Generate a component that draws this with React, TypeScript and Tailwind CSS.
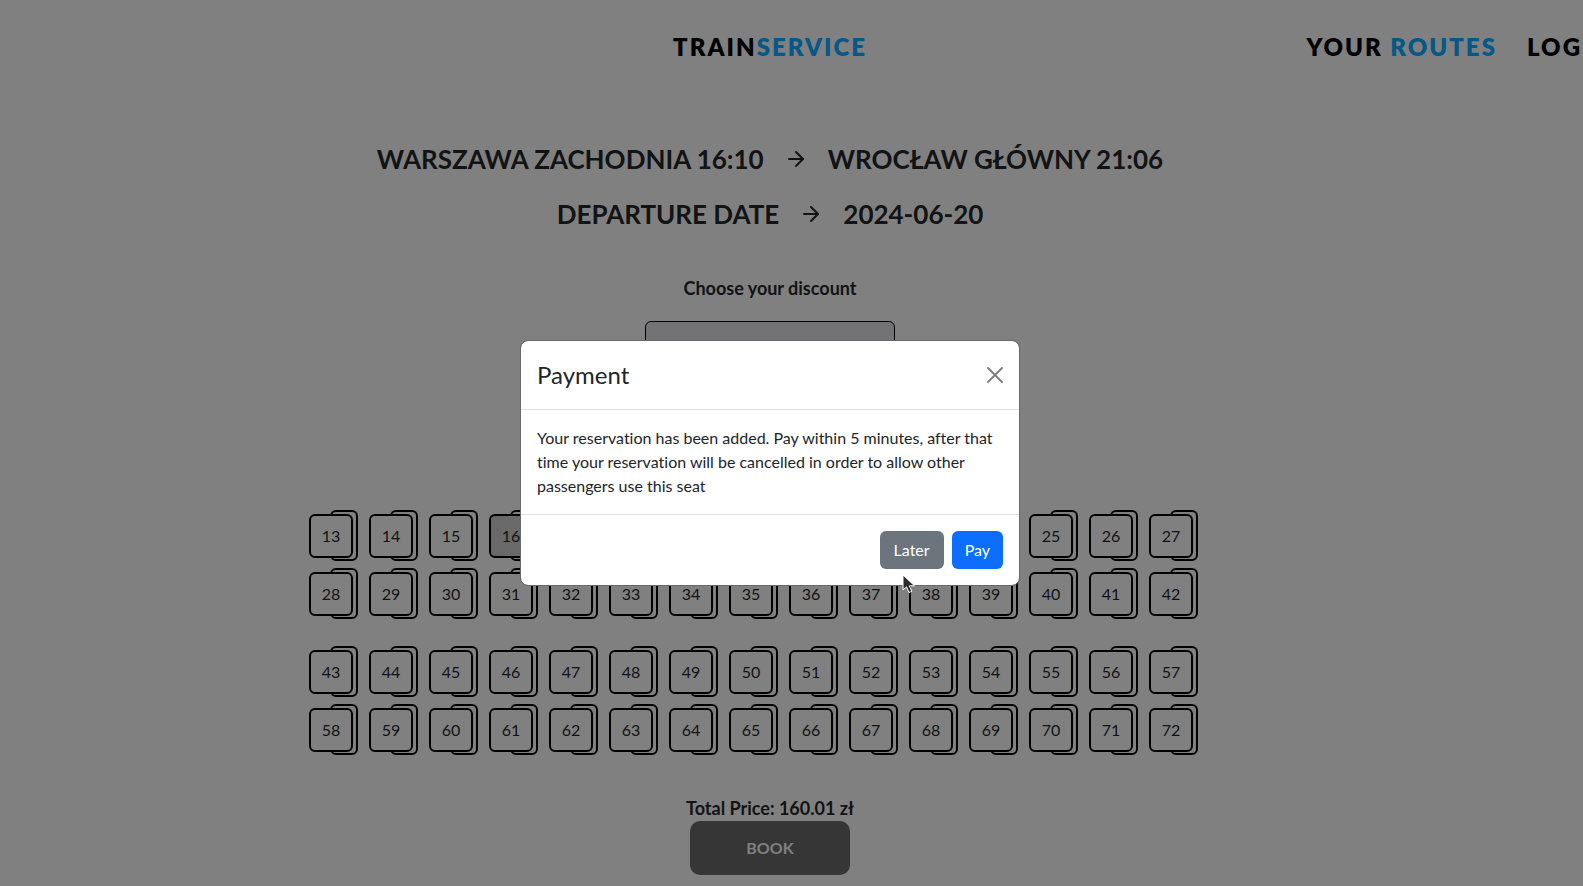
import { LuArrowRight } from "react-icons/lu";

const sections = [
  [13, 28],
  [43, 58],
];

function Seat({ number, taken }: { number: number; taken: boolean }) {
  return (
    <button
      type="button"
      aria-label={`Seat ${number}`}
      className="relative h-[51px] w-[49px] text-base"
    >
      <span className="absolute inset-y-0 right-0 w-7 rounded-md border-2 border-black" />
      <span
        className={`absolute top-1 left-0 flex size-11 items-center justify-center rounded-md border-2 border-black ${
          taken ? "bg-[#696969]" : "bg-[#808080]"
        }`}
      >
        {number}
      </span>
    </button>
  );
}

function SeatRow({ start }: { start: number }) {
  return (
    <div className="flex gap-[11px]">
      {Array.from({ length: 15 }, (_, i) => (
        <Seat key={i} number={start + i} taken={start + i === 16} />
      ))}
    </div>
  );
}

function PaymentDialog() {
  return (
    <div
      role="dialog"
      aria-labelledby="payment-title"
      className="absolute inset-x-0 top-[340px] mr-[43px] flex justify-center"
    >
      <div className="w-[500px] rounded-lg border border-[#696969] bg-white bg-clip-padding text-[#212529]">
        <div className="flex items-center justify-between border-b border-[#dee2e6] p-4">
          <h2 id="payment-title" className="text-2xl leading-9">
            Payment
          </h2>
          <button type="button" aria-label="Close" className="opacity-50">
            <svg viewBox="0 0 16 16" className="size-4" fill="#000">
              <path d="M.293.293a1 1 0 0 1 1.414 0L8 6.586 14.293.293a1 1 0 1 1 1.414 1.414L9.414 8l6.293 6.293a1 1 0 0 1-1.414 1.414L8 9.414l-6.293 6.293a1 1 0 0 1-1.414-1.414L6.586 8 .293 1.707a1 1 0 0 1 0-1.414z" />
            </svg>
          </button>
        </div>
        <p className="p-4 text-base">
          Your reservation has been added. Pay within 5 minutes, after that time your
          reservation will be cancelled in order to allow other passengers use this seat
        </p>
        <div className="flex justify-end gap-2 border-t border-[#dee2e6] p-4">
          <button
            type="button"
            className="min-w-16 rounded-md bg-[#6c757d] px-[13px] py-[7px] text-white"
          >
            Later
          </button>
          <button type="button" className="rounded-md bg-[#0d6efd] px-[13px] py-[7px] text-white">
            Pay
          </button>
        </div>
      </div>
      <svg
        viewBox="0 0 14 20"
        className="absolute top-[234px] left-1/2 ml-[132px] h-5 w-3.5"
        aria-hidden="true"
      >
        <path
          d="M1 1v15l3.5-3.2L7 18.5l2.8-1.2-2.5-5.5H12.5z"
          fill="#2b2b2b"
          stroke="#fff"
          strokeWidth="1"
        />
      </svg>
    </div>
  );
}

export default function App() {
  return (
    <div className="relative min-h-screen overflow-hidden bg-[#808080] font-['Lato',sans-serif] text-[#111315] [font-variant-ligatures:none]">
      <header className="grid grid-cols-[1fr_auto_1fr] items-center pt-[29px] pr-[43px] text-2xl leading-9 font-extrabold tracking-[2px] whitespace-nowrap text-black">
        <span />
        <a href="#home">
          TRAIN<span className="text-[#055887]">SERVICE</span>
        </a>
        <nav className="-mr-[43px] flex justify-end gap-[30px] pr-px">
          <a href="#routes">
            YOUR <span className="text-[#055887]">ROUTES</span>
          </a>
          <a href="#log">LOG</a>
        </nav>
      </header>

      <main className="flex flex-col items-center pt-[77px] pr-[43px]">
        <h1 className="flex items-center gap-5 text-[26px] leading-[34px] font-bold">
          WARSZAWA ZACHODNIA 16:10
          <LuArrowRight className="size-6" />
          WROCŁAW GŁÓWNY 21:06
        </h1>
        <h2 className="mt-[21px] flex items-center gap-5 text-[26px] leading-[34px] font-bold">
          DEPARTURE DATE
          <LuArrowRight className="size-6" />
          2024-06-20
        </h2>
        <label htmlFor="discount" className="mt-[43px] text-lg leading-7 font-bold">
          Choose your discount
        </label>
        <select
          id="discount"
          className="mt-[19px] h-12 w-[250px] appearance-none rounded-md border border-black bg-[#737376] pb-px pl-8"
        >
          <option>Student</option>
        </select>

        <div className="mt-[141px] flex w-[922px] flex-col gap-[27px]">
          {sections.map((rows) => (
            <div key={rows[0]} className="flex flex-col gap-[7px]">
              {rows.map((start) => (
                <SeatRow key={start} start={start} />
              ))}
            </div>
          ))}
        </div>

        <p className="mt-10 text-lg leading-[26px] font-bold">Total Price: 160.01 zł</p>
        <button
          type="button"
          className="h-[54px] w-40 rounded-[10px] bg-[#363636] text-base font-bold text-[#808080]"
        >
          BOOK
        </button>
      </main>

      <PaymentDialog />
    </div>
  );
}
